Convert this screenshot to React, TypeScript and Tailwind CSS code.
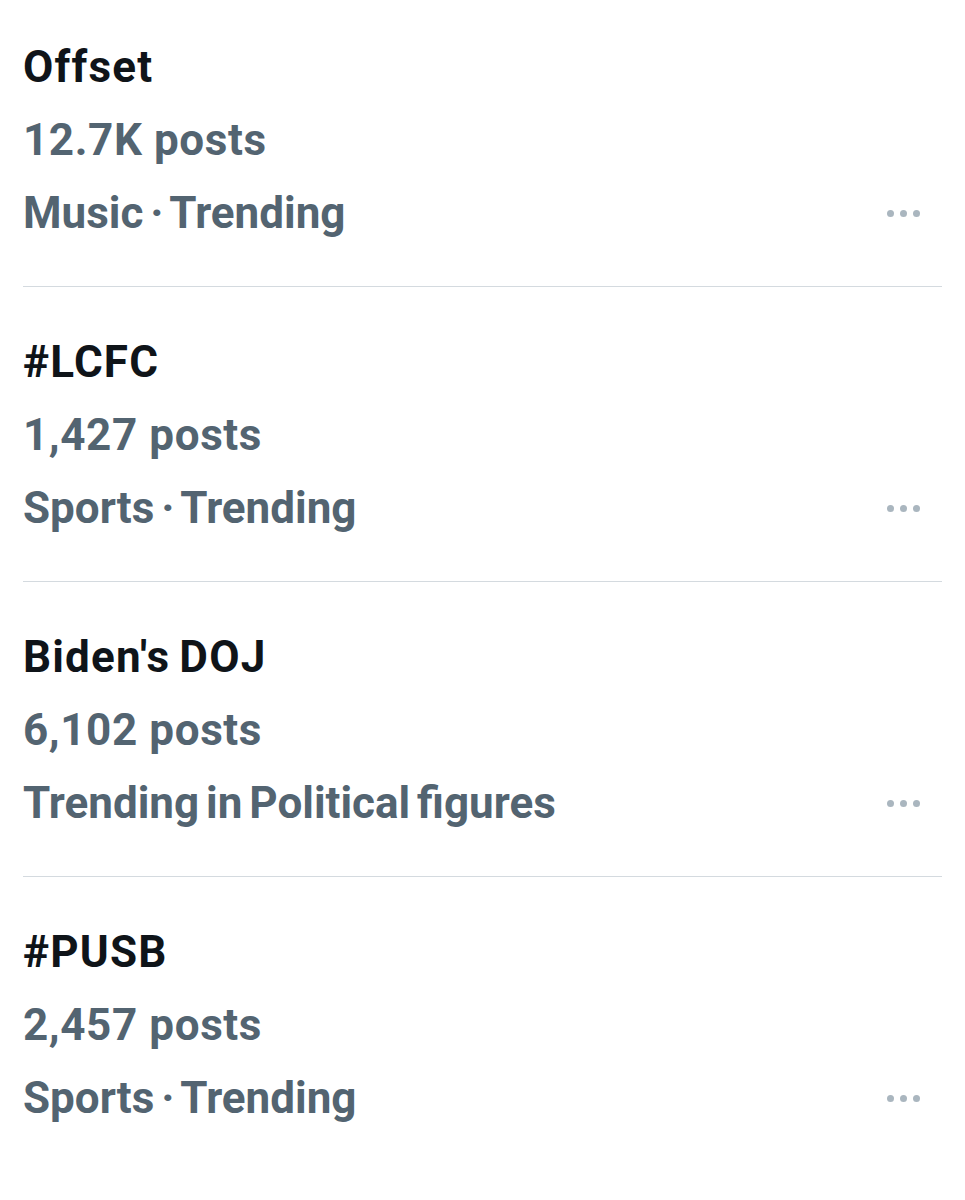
interface Trend {
  title: string
  posts: string
  meta: string
}

const trends: Trend[] = [
  { title: 'Offset', posts: '12.7K posts', meta: 'Music · Trending' },
  { title: '#LCFC', posts: '1,427 posts', meta: 'Sports · Trending' },
  { title: "Biden's DOJ", posts: '6,102 posts', meta: 'Trending in Political figures' },
  { title: '#PUSB', posts: '2,457 posts', meta: 'Sports · Trending' },
]

function Dots() {
  return (
    <div className="flex items-center gap-[6px] pr-[22px]">
      <span className="w-[7px] h-[7px] rounded-full bg-[#aab6bf]" />
      <span className="w-[7px] h-[7px] rounded-full bg-[#aab6bf]" />
      <span className="w-[7px] h-[7px] rounded-full bg-[#aab6bf]" />
    </div>
  )
}

function TrendRow({ trend, first }: { trend: Trend; first: boolean }) {
  return (
    <div className={first ? 'pt-[31px] pb-[36px]' : 'pt-[39px] pb-[36px]'}>
      <div className="text-[44px] leading-[73px] font-bold text-[#0f1419] tracking-[1.2px] [word-spacing:-3px]">
        {trend.title}
      </div>
      <div className="text-[44px] leading-[73px] font-bold text-[#536471] tracking-[0.6px]">{trend.posts}</div>
      <div className="flex items-center justify-between">
        <div className="text-[44px] leading-[73px] font-bold text-[#536471] [word-spacing:-4px]">{trend.meta}</div>
        <Dots />
      </div>
    </div>
  )
}

export default function App() {
  return (
    <div className="w-[965px] h-[1200px] bg-white px-[23px] overflow-hidden font-['Roboto',sans-serif]">
      {trends.map((t, i) => (
        <div key={t.title}>
          {i > 0 && <div className="h-px bg-[#d4dadf]" />}
          <TrendRow trend={t} first={i === 0} />
        </div>
      ))}
    </div>
  )
}
